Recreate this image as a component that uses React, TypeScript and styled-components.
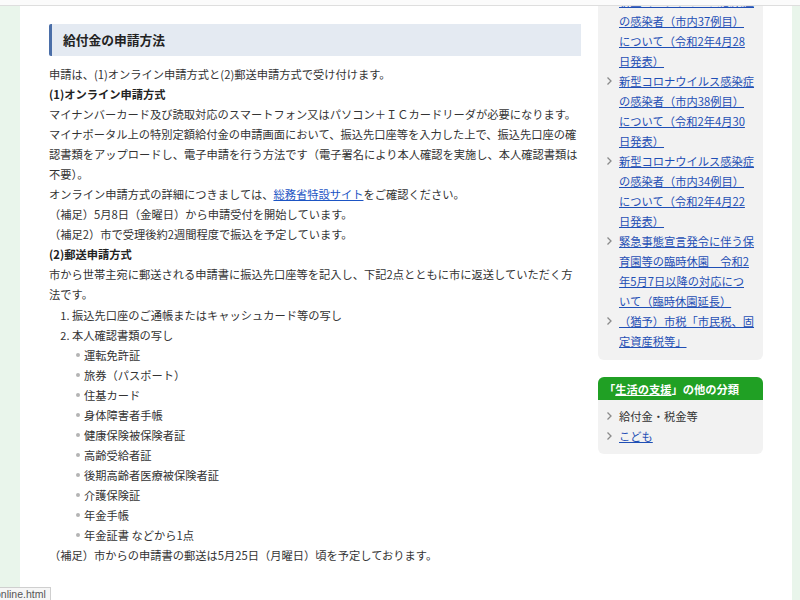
import styled, { createGlobalStyle } from "styled-components";

const GlobalStyle = createGlobalStyle`
  html, body {
    margin: 0;
    padding: 0;
    height: 100%;
    overflow: hidden;
    background: #e9f5eb;
  }
  body {
    font-family: "Noto Sans CJK JP", "Noto Sans", sans-serif;
    font-size: 11.25px;
    line-height: 20px;
    color: #333;
  }
`;

type SideLink = { text: string };

const newsLinks: SideLink[] = [
  { text: "新型コロナウイルス感染症の感染者（市内37例目）について（令和2年4月28日発表）" },
  { text: "新型コロナウイルス感染症の感染者（市内38例目）について（令和2年4月30日発表）" },
  { text: "新型コロナウイルス感染症の感染者（市内34例目）について（令和2年4月22日発表）" },
  { text: "緊急事態宣言発令に伴う保育園等の臨時休園　令和2年5月7日以降の対応について（臨時休園延長）" },
  { text: "（猶予）市税「市民税、固定資産税等」" },
];

const documents = [
  "運転免許証",
  "旅券（パスポート）",
  "住基カード",
  "身体障害者手帳",
  "健康保険被保険者証",
  "高齢受給者証",
  "後期高齢者医療被保険者証",
  "介護保険証",
  "年金手帳",
  "年金証書 などから1点",
];

const Chevron = () => (
  <ChevronIcon width="7" height="10" viewBox="0 0 7 10">
    <polyline points="1.5,1.5 5,5 1.5,8.5" fill="none" stroke="#8a8a8a" strokeWidth="1.3" />
  </ChevronIcon>
);

export default function App() {
  return (
    <>
      <GlobalStyle />
      <TopBar />
      <Frame>
        <MainColumn>
          <Heading>給付金の申請方法</Heading>
          <Para>申請は、(1)オンライン申請方式と(2)郵送申請方式で受け付けます。</Para>
          <Para $bold>(1)オンライン申請方式</Para>
          <Para>マイナンバーカード及び読取対応のスマートフォン又はパソコン＋ＩＣカードリーダが必要になります。</Para>
          <Para>
            マイナポータル上の特別定額給付金の申請画面において、振込先口座等を入力した上で、振込先口座の確認書類をアップロードし、電子申請を行う方法です（電子署名により本人確認を実施し、本人確認書類は不要）。
          </Para>
          <Para>
            オンライン申請方式の詳細につきましては、<TextLink href="#">総務省特設サイト</TextLink>をご確認ください。
          </Para>
          <Para>（補足）5月8日（金曜日）から申請受付を開始しています。</Para>
          <Para>（補足2）市で受理後約2週間程度で振込を予定しています。</Para>
          <Para $bold>(2)郵送申請方式</Para>
          <Para>市から世帯主宛に郵送される申請書に振込先口座等を記入し、下記2点とともに市に返送していただく方法です。</Para>
          <NumberList>
            <li>振込先口座のご通帳またはキャッシュカード等の写し</li>
            <li>
              本人確認書類の写し
              <DotList>
                {documents.map((d) => (
                  <li key={d}>{d}</li>
                ))}
              </DotList>
            </li>
          </NumberList>
          <Para>（補足）市からの申請書の郵送は5月25日（月曜日）頃を予定しております。</Para>
        </MainColumn>

        <SideColumn>
          <SideBox $clipped>
            <SideList>
              {newsLinks.map((l) => (
                <SideItem key={l.text}>
                  <Chevron />
                  <SideLinkText href="#">{l.text}</SideLinkText>
                </SideItem>
              ))}
            </SideList>
          </SideBox>
          <SideBox>
            <SideHeader>
              「<HeaderLink href="#">生活の支援</HeaderLink>」の他の分類
            </SideHeader>
            <SideList $pad>
              <SideItem>
                <Chevron />
                <SidePlain>給付金・税金等</SidePlain>
              </SideItem>
              <SideItem>
                <Chevron />
                <SideLinkText href="#">こども</SideLinkText>
              </SideItem>
            </SideList>
          </SideBox>
        </SideColumn>
      </Frame>
      <StatusTip>online.html</StatusTip>
    </>
  );
}

const TopBar = styled.div`
  height: 5px;
  background: #fbfbfb;
  border-bottom: 1px solid #dedede;
  position: relative;
  z-index: 2;
`;

const Frame = styled.div`
  display: flex;
  align-items: flex-start;
  gap: 17px;
  margin: 0 8px 0 20px;
  padding: 0 29px;
  height: calc(100vh - 6px);
  overflow: hidden;
  background: #fff;
`;

const MainColumn = styled.main`
  width: 532px;
  flex-shrink: 0;
  padding-top: 18px;
`;

const Heading = styled.h2`
  margin: 0 0 8px;
  height: 32px;
  display: flex;
  align-items: center;
  padding-left: 11px;
  background: #e4eaf2;
  border-left: 3px solid #4a6ea8;
  border-radius: 2px 0 0 2px;
  font-size: 12.75px;
  font-weight: bold;
  color: #222;
`;

const Para = styled.p<{ $bold?: boolean }>`
  margin: 0;
  font-weight: ${(p) => (p.$bold ? "bold" : "normal")};
  color: ${(p) => (p.$bold ? "#222" : "#333")};
`;

const TextLink = styled.a`
  color: #1d55c4;
  text-decoration: underline;
`;

const NumberList = styled.ol`
  margin: 1px 0 0;
  padding-left: 23px;

  & > li::marker {
    font-size: 11px;
  }
`;

const DotList = styled.ul`
  margin: 0;
  padding-left: 12px;
  list-style: none;

  & > li {
    position: relative;
  }
  & > li::before {
    content: "";
    position: absolute;
    left: -8px;
    top: 8px;
    width: 4px;
    height: 4px;
    border-radius: 50%;
    background: #b4b4b4;
  }
`;

const SideColumn = styled.aside`
  width: 165px;
  flex-shrink: 0;
  display: flex;
  flex-direction: column;
  gap: 17px;
`;

const SideBox = styled.section<{ $clipped?: boolean }>`
  background: #f2f2f2;
  border-radius: ${(p) => (p.$clipped ? "0 0 6px 6px" : "6px")};
  margin-top: ${(p) => (p.$clipped ? "-15px" : "0")};
  padding-bottom: ${(p) => (p.$clipped ? "9px" : "8px")};
  overflow: hidden;
`;

const SideHeader = styled.h3`
  margin: 0;
  height: 23px;
  display: flex;
  align-items: center;
  padding: 0 6px;
  background: #20a024;
  color: #fff;
  font-size: 11.25px;
  font-weight: bold;
  white-space: nowrap;
`;

const HeaderLink = styled.a`
  color: #fff;
  text-decoration: underline;
`;

const SideList = styled.ul<{ $pad?: boolean }>`
  list-style: none;
  margin: 0;
  padding: ${(p) => (p.$pad ? "6px 0 0 8px" : "0 0 0 8px")};
`;

const SideItem = styled.li`
  display: flex;
  align-items: flex-start;
`;

const ChevronIcon = styled.svg`
  flex-shrink: 0;
  margin: 5px 6px 0 0;
`;

const SideLinkText = styled.a`
  width: 136px;
  color: #1f4fb5;
  text-decoration: underline;
`;

const SidePlain = styled.span`
  width: 136px;
  color: #333;
`;

const StatusTip = styled.div`
  position: fixed;
  left: -10px;
  bottom: -2px;
  height: 13px;
  padding: 0 4px;
  background: #f6f6f6;
  border: 1px solid #cfcfcf;
  font-family: "Liberation Sans", sans-serif;
  font-size: 10.5px;
  line-height: 13px;
  color: #555;
`;
